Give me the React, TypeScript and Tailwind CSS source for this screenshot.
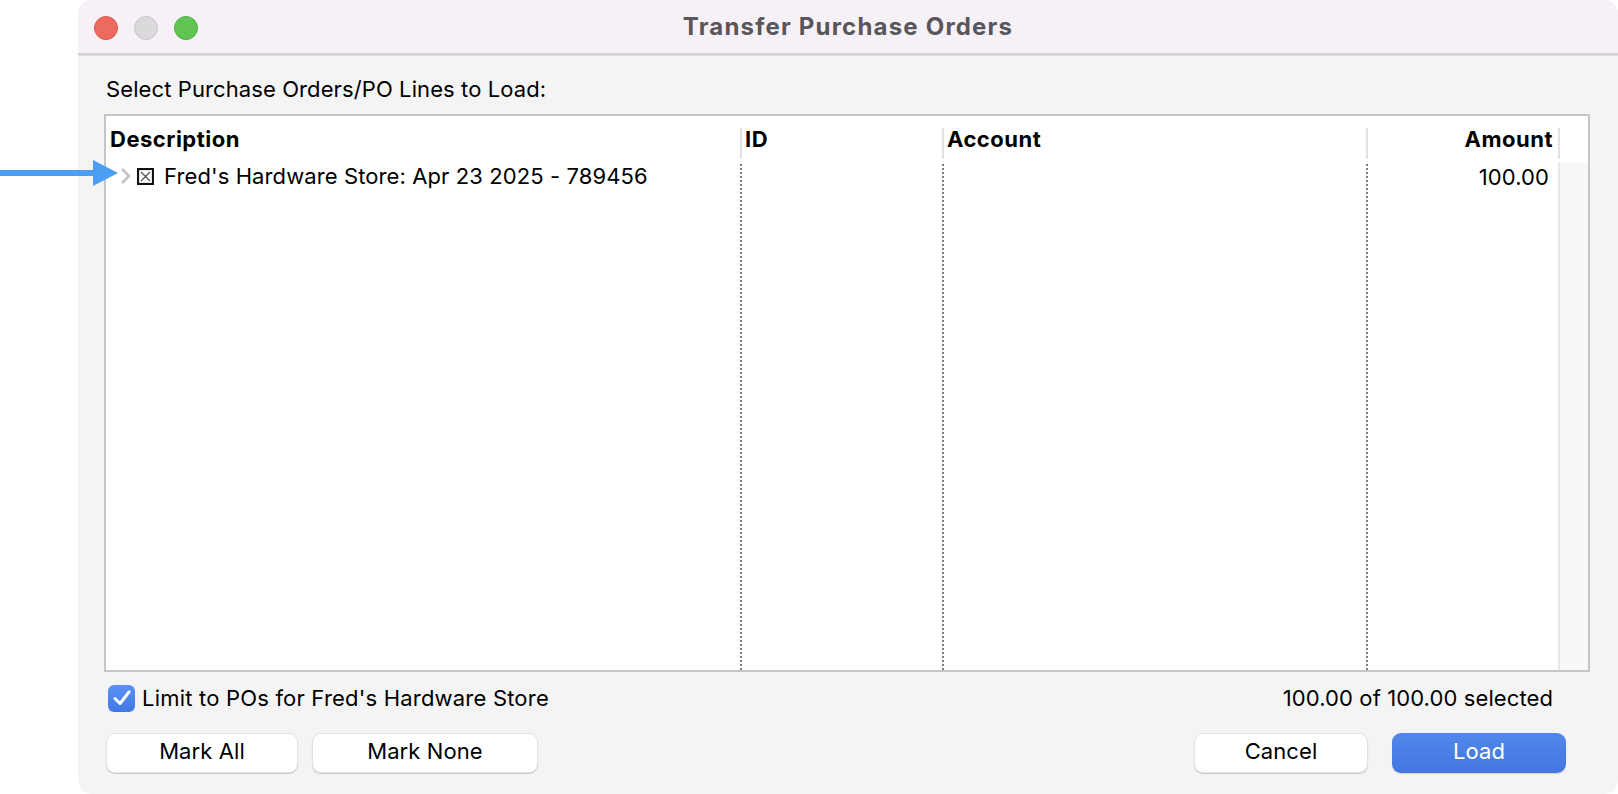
import React from 'react'

const font = { fontFamily: 'Inter, "Liberation Sans", sans-serif' }

function BoxIcon() {
  return (
    <svg width="17" height="17" viewBox="0 0 17 17" className="shrink-0">
      <rect x="1" y="1" width="15" height="15" fill="#fff" stroke="#111" strokeWidth="2.2" />
      <path d="M4 4 L13 13 M13 4 L4 13" stroke="#555" strokeWidth="1.3" />
    </svg>
  )
}

function Chevron() {
  return (
    <svg width="12" height="18" viewBox="0 0 12 18" className="shrink-0">
      <polyline points="2,2 9,9 2,16" fill="none" stroke="#c4c4c4" strokeWidth="2.6" />
    </svg>
  )
}

function Button({ children, primary }: { children: React.ReactNode; primary?: boolean }) {
  return (
    <button
      className={
        primary
          ? 'w-full h-[40px] pb-[3px] rounded-[9px] bg-gradient-to-b from-[#5187ea] to-[#4576e0] text-white text-[22px] shadow-[0_1px_1px_rgba(0,0,0,0.15)]'
          : 'w-full h-[40px] pb-[3px] rounded-[9px] bg-white text-black text-[22px] border border-[#e2e2e2] shadow-[0_1px_1px_rgba(0,0,0,0.18)]'
      }
    >
      {children}
    </button>
  )
}

export default function App() {
  return (
    <div className="relative w-[1618px] h-[794px] bg-white overflow-hidden" style={font}>
      {/* window */}
      <div className="ml-[78px] w-[1540px] h-[794px] flex flex-col rounded-[14px] overflow-hidden bg-[#f4f4f4]">
        {/* title bar */}
        <div className="relative h-[53px] shrink-0 bg-[#f6f1f7] flex items-center justify-center">
          <div className="absolute left-[16px] top-[16px] flex gap-[16px]">
            <span className="w-[24px] h-[24px] rounded-full bg-[#ed6a5e] border border-[#d9584d]" />
            <span className="w-[24px] h-[24px] rounded-full bg-[#dcd9dd] border border-[#c8c4c9]" />
            <span className="w-[24px] h-[24px] rounded-full bg-[#61c554] border border-[#52ad45]" />
          </div>
          <span className="text-[24px] font-bold text-[#58565a] tracking-[1.2px]">Transfer Purchase Orders</span>
        </div>
        <div className="h-[3px] shrink-0 bg-[#d2d0d3] border-b border-[#dedede]" />

        {/* body */}
        <div className="flex-1 flex flex-col px-[26px] pr-[28px] text-[22px] tracking-[0.1px]">
          <div className="mt-[21px] h-[24px] flex items-center pl-[2px] text-black">
            Select Purchase Orders/PO Lines to Load:
          </div>

          {/* table */}
          <div className="mt-[13px] h-[558px] border-2 border-[#c6c6c6] bg-white flex flex-col">
            <div className="grid grid-cols-[634px_202px_424px_192px_1fr] h-[46px] shrink-0 font-bold tracking-[0.5px] text-black">
              <div className="flex items-center pl-[4px]">Description</div>
              <div className="relative flex items-center pl-[5px]">
                <span className="absolute left-0 top-[12px] h-[31px] w-[2px] bg-[#e3e3e3]" />
                ID
              </div>
              <div className="relative flex items-center pl-[5px]">
                <span className="absolute left-0 top-[12px] h-[31px] w-[2px] bg-[#e3e3e3]" />
                Account
              </div>
              <div className="relative flex items-center justify-end pr-[5px]">
                <span className="absolute left-0 top-[12px] h-[31px] w-[2px] bg-[#e3e3e3]" />
                Amount
              </div>
              <div className="relative">
                <span className="absolute left-0 top-[12px] h-[31px] w-[2px] bg-[#e3e3e3]" />
              </div>
            </div>

            <div className="flex-1 grid grid-cols-[634px_202px_424px_192px_1fr] text-black">
              <div>
                <div className="h-[28px] flex items-center pl-[14px] gap-[5px]">
                  <Chevron />
                  <BoxIcon />
                  <span className="ml-[5px]">Fred's Hardware Store: Apr 23 2025 - 789456</span>
                </div>
              </div>
              <div className="border-l-2 border-dotted border-[#7c7c7c] mt-[2px]" />
              <div className="border-l-2 border-dotted border-[#7c7c7c] mt-[2px]" />
              <div className="border-l-2 border-dotted border-[#7c7c7c] mt-[2px]">
                <div className="h-[26px] flex items-center justify-end pr-[9px]">100.00</div>
              </div>
              <div className="border-l-2 border-[#e6e6e6] bg-[#f8f8f8]" />
            </div>
          </div>

          {/* options row */}
          <div className="mt-[12px] h-[28px] flex items-center justify-between text-black">
            <label className="flex items-center gap-[7px] ml-[4px]">
              <span className="w-[27px] h-[27px] rounded-[6px] bg-gradient-to-b from-[#5a92f4] to-[#3f78e8] flex items-center justify-center">
                <svg width="18" height="16" viewBox="0 0 18 16">
                  <polyline points="2,8.5 7,13.5 16,2" fill="none" stroke="#fff" strokeWidth="3" strokeLinecap="round" strokeLinejoin="round" />
                </svg>
              </span>
              <span className="tracking-[0.2px]">Limit to POs for Fred's Hardware Store</span>
            </label>
            <span className="mr-[37px]">100.00 of 100.00 selected</span>
          </div>

          {/* buttons */}
          <div className="mt-[21px] flex items-center justify-between pl-[2px] pr-[24px]">
            <div className="flex gap-[14px]">
              <div className="w-[192px] flex"><Button>Mark All</Button></div>
              <div className="w-[226px] flex"><Button>Mark None</Button></div>
            </div>
            <div className="flex gap-[24px]">
              <div className="w-[174px] flex"><Button>Cancel</Button></div>
              <div className="w-[174px] flex"><Button primary>Load</Button></div>
            </div>
          </div>
        </div>
      </div>

      {/* annotation arrow */}
      <svg className="absolute left-0 top-[160px]" width="120" height="27" viewBox="0 0 120 27">
        <rect x="0" y="10" width="96" height="6" fill="#4b9ff3" />
        <polygon points="93,0 118,13 93,26" fill="#4b9ff3" />
      </svg>
    </div>
  )
}
